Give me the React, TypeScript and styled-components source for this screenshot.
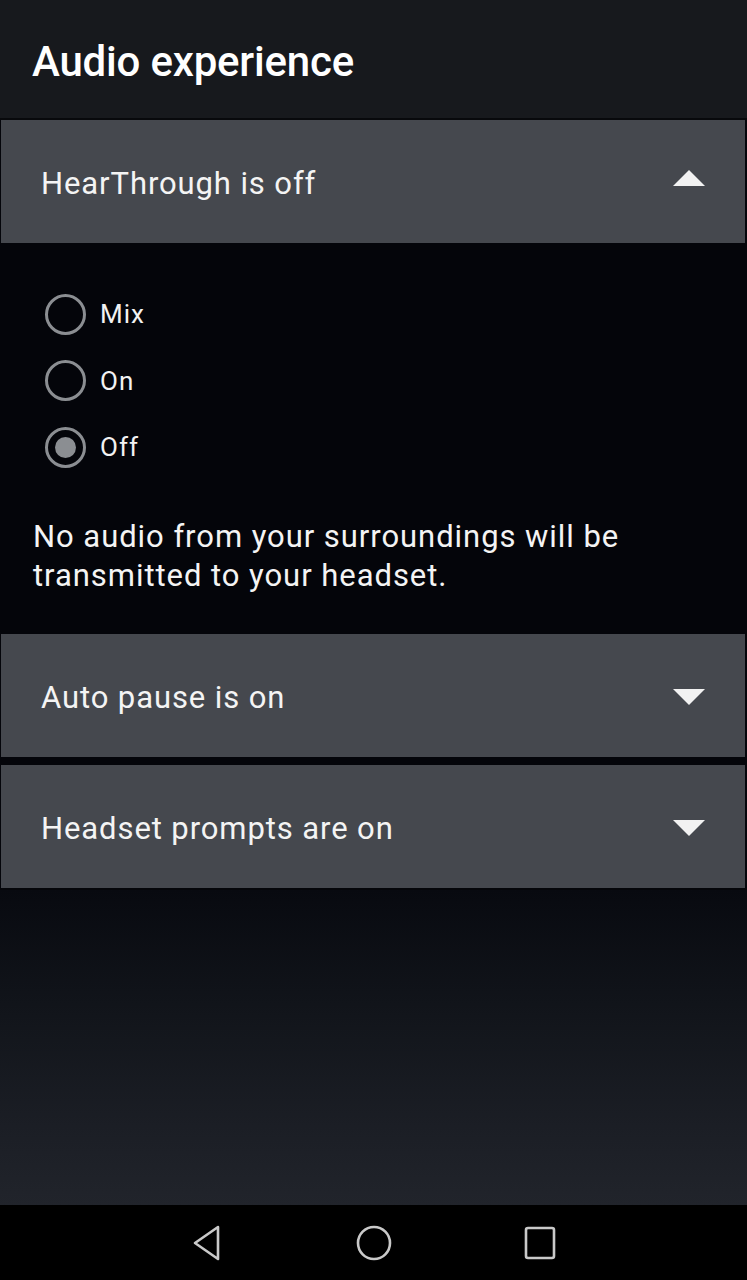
import React from 'react';
import styled, { createGlobalStyle } from 'styled-components';

const GlobalStyle = createGlobalStyle`
  html, body {
    margin: 0;
    padding: 0;
    background: #000;
  }
  #root {
    height: 1280px;
  }
`;

const Screen = styled.div`
  width: 747px;
  height: 1280px;
  display: flex;
  flex-direction: column;
  font-family: Roboto, 'Noto Sans', sans-serif;
  color: #fff;
  background: #04050a;
`;

const Header = styled.header`
  height: 118px;
  flex-shrink: 0;
  display: flex;
  align-items: center;
  padding: 0 33px;
  background: #17191d;
  border-bottom: 2px solid #08090c;
`;

const Title = styled.h1`
  margin: 0 0 0 -1px;
  font-size: 42px;
  font-weight: 500;
  letter-spacing: -0.2px;
  padding-top: 4px;
`;

const Panel = styled.div`
  height: 123px;
  flex-shrink: 0;
  margin: 0 2px 0 1px;
  display: flex;
  align-items: center;
  justify-content: space-between;
  padding: 0 40px 0 40px;
  background: #45484e;
`;

const PanelLabel = styled.span`
  font-size: 31px;
  font-weight: 400;
  letter-spacing: 0.9px;
  padding-top: 3px;
  color: #f4f4f4;
`;

const Arrow = styled.span<{ $up?: boolean }>`
  width: 0;
  height: 0;
  border-left: 16px solid transparent;
  border-right: 16px solid transparent;
  ${({ $up }) =>
    $up ? 'border-bottom: 16px solid #f2f2f2;' : 'border-top: 16px solid #f2f2f2;'}
  margin-top: ${({ $up }) => ($up ? '-8px' : '2px')};
`;

const Body = styled.section`
  height: 391px;
  flex-shrink: 0;
  box-sizing: border-box;
  padding: 51px 33px 0;
  background: #04050a;
`;

const RadioList = styled.div`
  display: flex;
  flex-direction: column;
  gap: 26.5px;
  padding-left: 12px;
`;

const RadioRow = styled.label`
  display: flex;
  align-items: center;
  gap: 14px;
  height: 40px;
  font-size: 26px;
  letter-spacing: 1px;
  color: #f2f2f2;
`;

const RadioCircle = styled.span<{ $checked?: boolean }>`
  width: 41px;
  height: 41px;
  box-sizing: border-box;
  border-radius: 50%;
  border: 3.5px solid #8b8e92;
  display: flex;
  align-items: center;
  justify-content: center;

  &::after {
    content: '';
    display: ${({ $checked }) => ($checked ? 'block' : 'none')};
    width: 21px;
    height: 21px;
    border-radius: 50%;
    background: #8b8e92;
  }
`;

const Description = styled.p`
  margin: 50px 0 0;
  font-size: 31px;
  line-height: 39px;
  letter-spacing: 0.95px;
  color: #f4f4f4;
`;

const Divider = styled.div`
  height: 8px;
  flex-shrink: 0;
  background: #04050a;
`;

const Filler = styled.div`
  flex: 1;
  border-top: 2px solid #05060a;
  background: linear-gradient(180deg, #080a10 0%, #12151b 40%, #1b1e25 75%, #21242b 100%);
`;

const NavBar = styled.nav`
  height: 75px;
  flex-shrink: 0;
  background: #000;
  display: flex;
  align-items: center;
  justify-content: center;
  gap: 128px;
`;

const NavIcon = styled.svg`
  width: 38px;
  height: 38px;
  display: block;
`;

const options = [
  { label: 'Mix', checked: false },
  { label: 'On', checked: false },
  { label: 'Off', checked: true },
];

const App: React.FC = () => {
  return (
    <>
      <GlobalStyle />
      <Screen>
        <Header>
          <Title>Audio experience</Title>
        </Header>

        <Panel>
          <PanelLabel>HearThrough is off</PanelLabel>
          <Arrow $up />
        </Panel>

        <Body>
          <RadioList>
            {options.map((o) => (
              <RadioRow key={o.label}>
                <RadioCircle $checked={o.checked} />
                {o.label}
              </RadioRow>
            ))}
          </RadioList>
          <Description>
            No audio from your surroundings will be
            <br />
            transmitted to your headset.
          </Description>
        </Body>

        <Panel>
          <PanelLabel>Auto pause is on</PanelLabel>
          <Arrow />
        </Panel>
        <Divider />
        <Panel>
          <PanelLabel>Headset prompts are on</PanelLabel>
          <Arrow />
        </Panel>

        <Filler />

        <NavBar>
          <NavIcon viewBox="0 0 38 38">
            <path
              d="M29 3 L6 19 L29 35 Z"
              fill="none"
              stroke="#c9c9c9"
              strokeWidth="2.6"
              strokeLinejoin="round"
            />
          </NavIcon>
          <NavIcon viewBox="0 0 38 38">
            <ellipse cx="19" cy="19" rx="16" ry="16" fill="none" stroke="#c9c9c9" strokeWidth="2.6" />
          </NavIcon>
          <NavIcon viewBox="0 0 38 38">
            <rect x="5" y="4" width="28" height="30" rx="2" fill="none" stroke="#c9c9c9" strokeWidth="2.6" />
          </NavIcon>
        </NavBar>
      </Screen>
    </>
  );
};

export default App;
